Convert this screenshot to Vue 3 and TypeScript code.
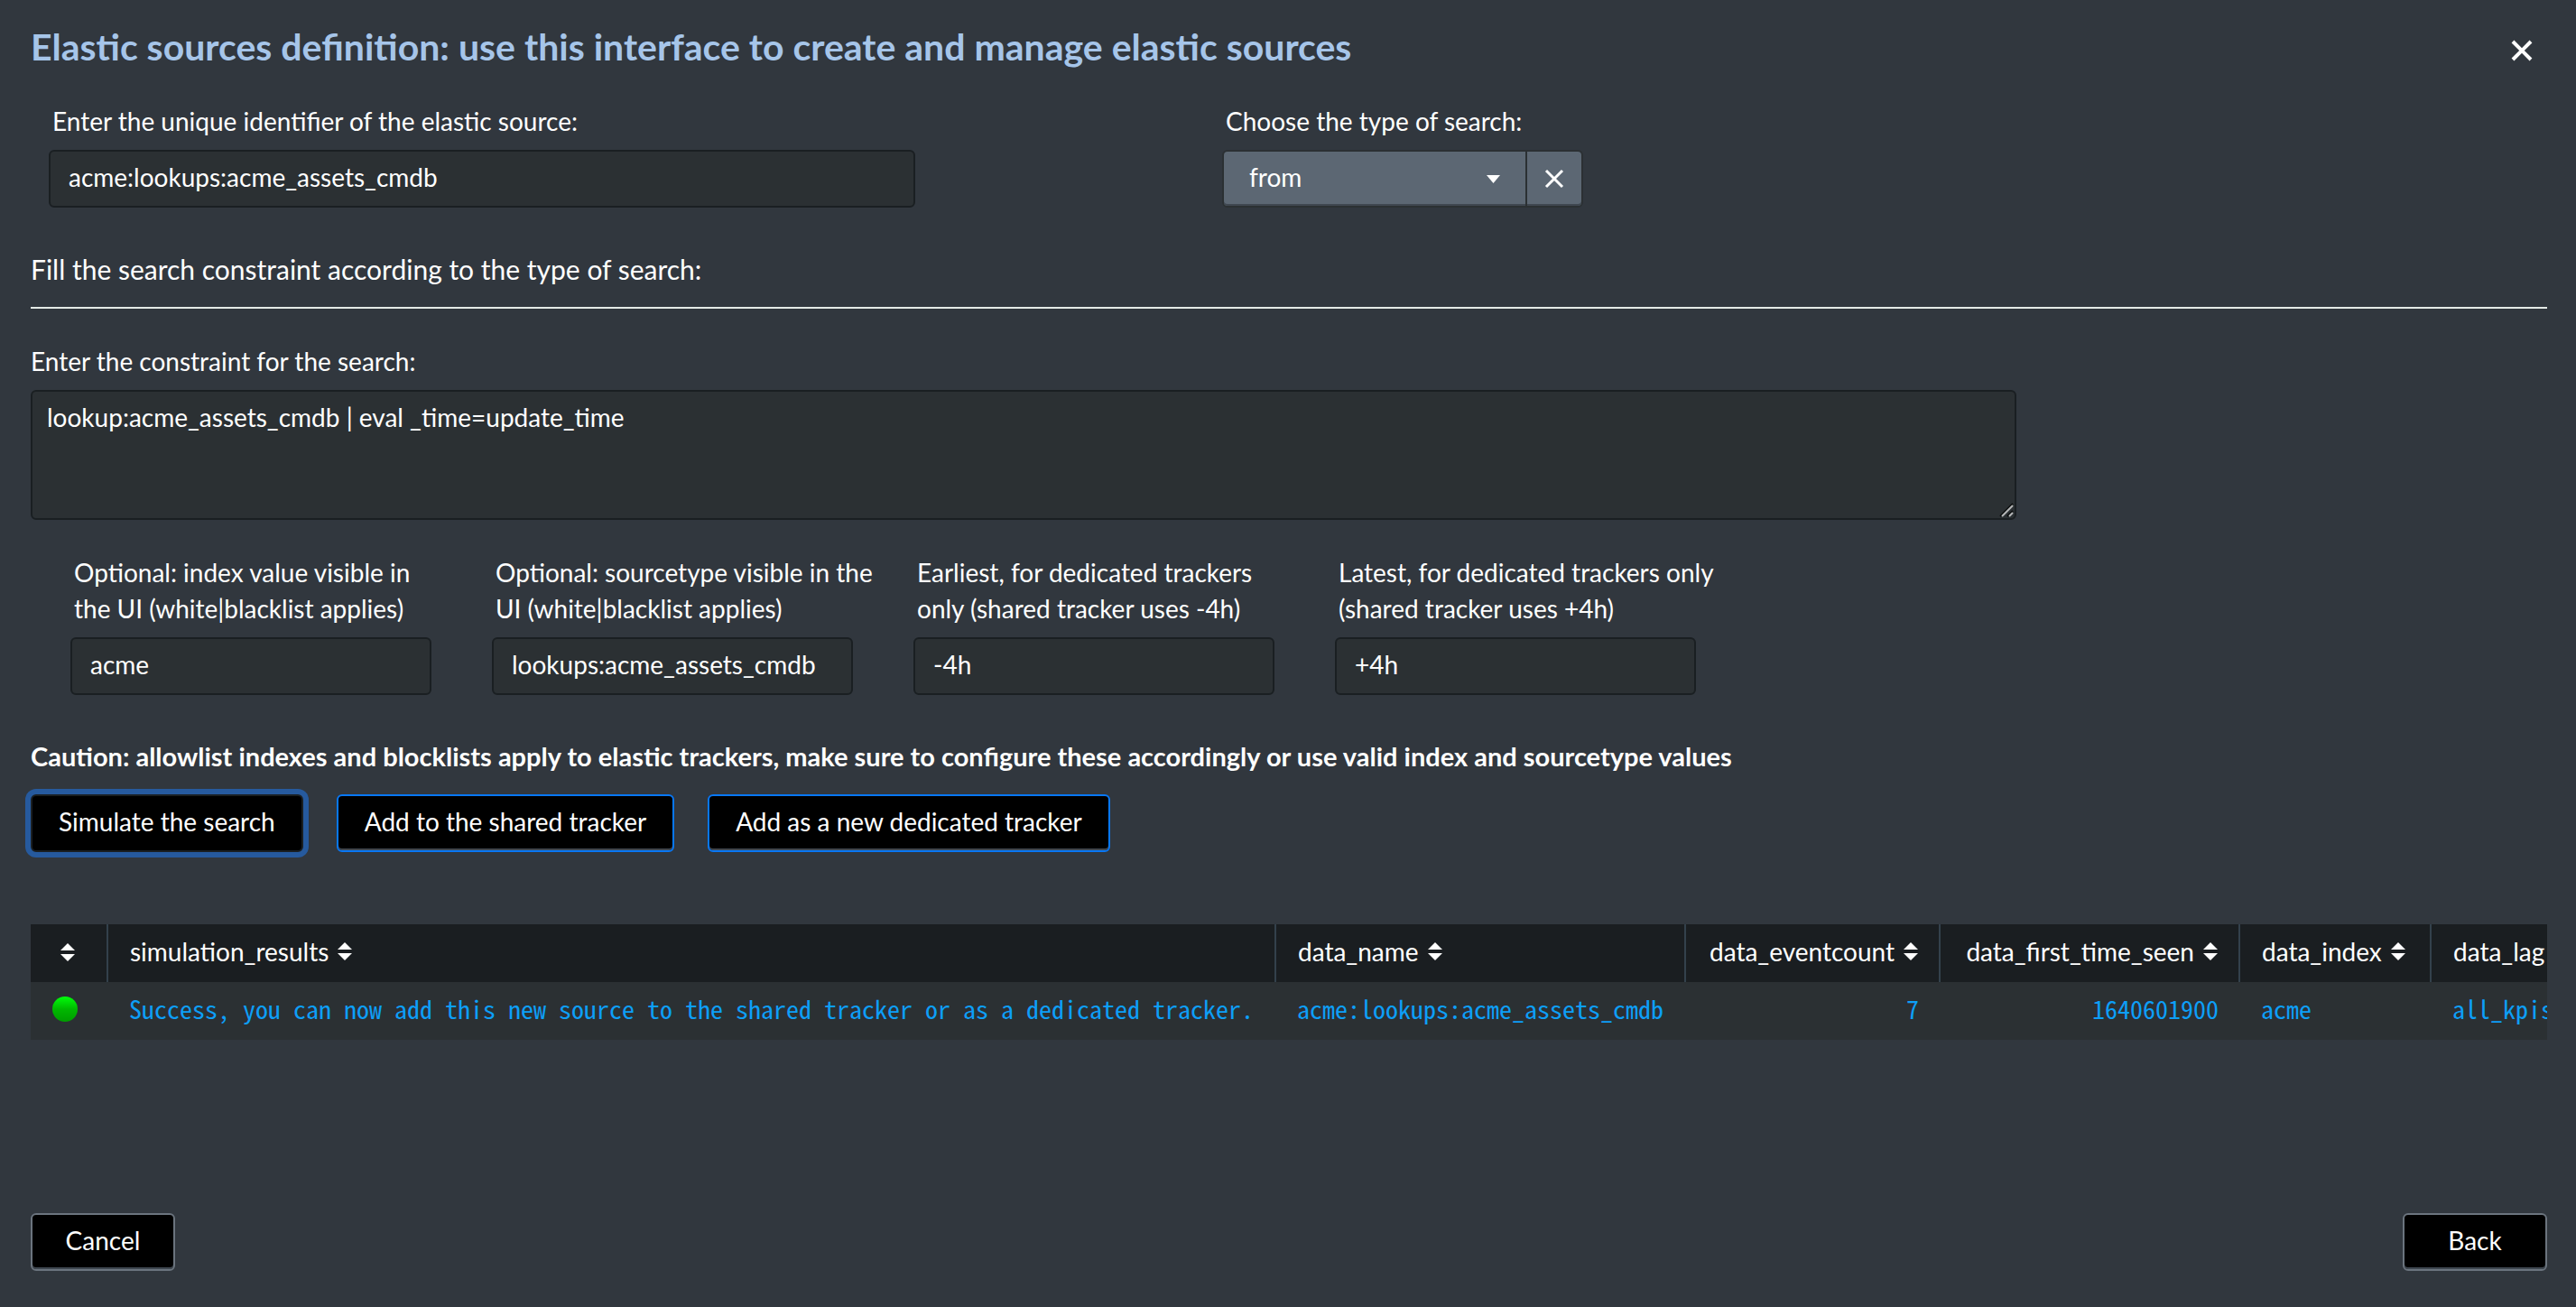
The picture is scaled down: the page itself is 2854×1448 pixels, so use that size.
<script setup lang="ts">
import { ref } from 'vue'

interface OptionField {
  id: string
  label: string
  value: string
}

interface Column {
  key: string
  width: number
  numeric?: boolean
}

const sourceId = ref('acme:lookups:acme_assets_cmdb')
const searchType = ref('from')
const constraint = ref('lookup:acme_assets_cmdb | eval _time=update_time')

const optionFields = ref<OptionField[]>([
  { id: 'opt-index', label: 'Optional: index value visible in\nthe UI (white|blacklist applies)', value: 'acme' },
  { id: 'opt-sourcetype', label: 'Optional: sourcetype visible in the\nUI (white|blacklist applies)', value: 'lookups:acme_assets_cmdb' },
  { id: 'opt-earliest', label: 'Earliest, for dedicated trackers\nonly (shared tracker uses -4h)', value: '-4h' },
  { id: 'opt-latest', label: 'Latest, for dedicated trackers only\n(shared tracker uses +4h)', value: '+4h' },
])

const columns: Column[] = [
  { key: 'simulation_results', width: 1294 },
  { key: 'data_name', width: 454 },
  { key: 'data_eventcount', width: 282, numeric: true },
  { key: 'data_first_time_seen', width: 332, numeric: true },
  { key: 'data_index', width: 212 },
  { key: 'data_lag', width: 180 },
]

const row: Record<string, string> = {
  simulation_results: 'Success, you can now add this new source to the shared tracker or as a dedicated tracker.',
  data_name: 'acme:lookups:acme_assets_cmdb',
  data_eventcount: '7',
  data_first_time_seen: '1640601900',
  data_index: 'acme',
  data_lag: 'all_kpis',
}
</script>

<template>
  <main class="modal">
    <header class="modal-head">
      <h1>Elastic sources definition: use this interface to create and manage elastic sources</h1>
      <button class="close" type="button" aria-label="Close">
        <svg width="24" height="24" viewBox="0 0 24 24"><path d="M2 2 22 22M22 2 2 22" /></svg>
      </button>
    </header>

    <section class="identity">
      <div class="field">
        <label for="source-id">Enter the unique identifier of the elastic source:</label>
        <input id="source-id" v-model="sourceId" class="text-box" type="text" />
      </div>
      <div class="field">
        <label for="search-type">Choose the type of search:</label>
        <div class="picker">
          <div class="picker-main">
            <select id="search-type" v-model="searchType">
              <option value="from">from</option>
            </select>
            <svg class="caret" width="15" height="9" viewBox="0 0 15 9"><path d="M0 0H15L7.5 9Z" /></svg>
          </div>
          <button class="picker-clear" type="button" aria-label="Clear">
            <svg width="22" height="22" viewBox="0 0 22 22"><path d="M2 2 20 20M20 2 2 20" /></svg>
          </button>
        </div>
      </div>
    </section>

    <h2>Fill the search constraint according to the type of search:</h2>

    <section class="constraint">
      <label for="constraint">Enter the constraint for the search:</label>
      <div class="area">
        <textarea id="constraint" v-model="constraint"></textarea>
        <svg class="grip" width="16" height="16" viewBox="0 0 16 16">
          <path class="grip-shade" d="M1 15 15 1M9 15 15 9" />
          <path class="grip-line" d="M3 15 15 3M11 15 15 11" />
        </svg>
      </div>
    </section>

    <section class="options">
      <div v-for="f in optionFields" :key="f.id" class="field">
        <label :for="f.id">{{ f.label }}</label>
        <input :id="f.id" v-model="f.value" class="text-box" type="text" />
      </div>
    </section>

    <p class="caution">
      Caution: allowlist indexes and blocklists apply to elastic trackers, make sure to configure these accordingly or use valid index and sourcetype values
    </p>

    <div class="actions">
      <button class="btn focused" type="button">Simulate the search</button>
      <button class="btn primary" type="button">Add to the shared tracker</button>
      <button class="btn primary" type="button">Add as a new dedicated tracker</button>
    </div>

    <div class="results">
      <table>
        <colgroup>
          <col class="status-col" />
          <col v-for="c in columns" :key="c.key" :style="{ width: c.width + 'px' }" />
        </colgroup>
        <thead>
          <tr>
            <th class="status" scope="col">
              <button class="sort" type="button" aria-label="Sort by status">
                <svg class="sort-icon" width="16" height="20" viewBox="0 0 16 20"><path d="M8 0 16 8H0ZM8 20 0 12H16Z" /></svg>
              </button>
            </th>
            <th v-for="c in columns" :key="c.key" scope="col" :class="{ numeric: c.numeric }">
              <button class="sort" type="button">
                {{ c.key }}
                <svg class="sort-icon" width="16" height="20" viewBox="0 0 16 20"><path d="M8 0 16 8H0ZM8 20 0 12H16Z" /></svg>
              </button>
            </th>
          </tr>
        </thead>
        <tbody>
          <tr>
            <td class="status"><span class="dot"></span></td>
            <td v-for="c in columns" :key="c.key" :class="{ numeric: c.numeric }">{{ row[c.key] }}</td>
          </tr>
        </tbody>
      </table>
    </div>

    <footer class="modal-foot">
      <button class="btn plain" type="button">Cancel</button>
      <button class="btn plain" type="button">Back</button>
    </footer>
  </main>
</template>

<style>
body {
  margin: 0;
  background: #31373e;
}
</style>

<style scoped>
* {
  box-sizing: border-box;
}
.modal {
  display: flex;
  flex-direction: column;
  min-height: 100vh;
  padding: 32px 32px 40px 34px;
  background: #31373e;
  color: #fff;
  font-family: Lato, 'Liberation Sans', sans-serif;
  font-size: 28px;
  line-height: 40px;
}
button,
input,
select,
textarea {
  margin: 0;
  color: inherit;
  font: inherit;
}
.modal-head {
  display: flex;
  justify-content: space-between;
  align-items: flex-start;
  height: 44px;
}
h1 {
  margin: 0;
  color: #a6c5e9;
  font-size: 41px;
  font-weight: 700;
  line-height: 40px;
}
.close {
  display: flex;
  margin: 12px 16px 0 0;
  padding: 0;
  border: 0;
  background: none;
}
.close path {
  fill: none;
  stroke: #fff;
  stroke-width: 4;
}
.identity {
  display: grid;
  grid-template-columns: minmax(0, 960px) minmax(0, 400px);
  column-gap: 340px;
  margin: 38px 0 0 20px;
}
.field label {
  display: block;
  margin-bottom: 12px;
  padding-left: 4px;
  white-space: pre;
}
.text-box {
  display: block;
  width: 100%;
  height: 64px;
  padding: 0 20px 4px;
  border: 2px solid #1a1f22;
  border-radius: 6px;
  background: #2b3033;
  outline: 0;
}
.picker {
  display: flex;
  width: 400px;
  height: 64px;
  border: 2px solid #2b3033;
  border-radius: 6px;
  background: #2b3033;
}
.picker-main {
  position: relative;
  flex: 1;
}
.picker select {
  width: 100%;
  height: 60px;
  padding: 0 28px 4px;
  border: 0;
  border-radius: 4px 0 0 4px;
  background: #5c6773;
  box-shadow: inset 0 -2px #3f4750;
  appearance: none;
}
.caret {
  position: absolute;
  top: 26px;
  right: 28px;
  fill: #fff;
  pointer-events: none;
}
.picker-clear {
  display: flex;
  align-items: center;
  justify-content: center;
  width: 60px;
  margin-left: 2px;
  padding: 0;
  border: 0;
  border-radius: 0 4px 4px 0;
  background: #5c6773;
  box-shadow: inset 0 -2px #3f4750;
}
.picker-clear path {
  fill: none;
  stroke: #fff;
  stroke-width: 3;
}
h2 {
  margin: 48px 0 0;
  padding-bottom: 22px;
  border-bottom: 2px solid #e3e9e6;
  font-size: 30px;
  font-weight: 400;
  line-height: 40px;
}
.constraint {
  margin-top: 38px;
}
.constraint label {
  display: block;
  margin-bottom: 12px;
}
.area {
  position: relative;
  max-width: 2200px;
}
textarea {
  display: block;
  width: 100%;
  height: 144px;
  padding: 8px 16px;
  border: 2px solid #1a1f22;
  border-radius: 6px;
  background: #2b3033;
  outline: 0;
  resize: none;
}
.grip {
  position: absolute;
  right: 3px;
  bottom: 3px;
  fill: none;
  stroke-width: 2;
  pointer-events: none;
}
.grip-shade {
  stroke: #0c0e0f;
}
.grip-line {
  stroke: #b4b6b7;
}
.options {
  display: grid;
  grid-template-columns: repeat(4, minmax(0, 400px));
  column-gap: 67px;
  margin: 38px 0 0 44px;
}
.caution {
  margin: 48px 0 0;
  font-size: 29px;
  font-weight: 700;
}
.actions {
  display: flex;
  gap: 37px;
  margin-top: 22px;
}
.btn {
  height: 64px;
  padding: 0 29px 4px;
  border: 2px solid #6b747e;
  border-radius: 6px;
  background: #000;
  box-shadow: inset 0 -2px #3f4750;
}
.btn.primary {
  border-color: #0877f5;
}
.btn.focused {
  border-color: #1a1f22;
  box-shadow: 0 0 0 6px #265a9e;
}
.btn.plain {
  width: 160px;
}
.results {
  margin-top: 80px;
  overflow: hidden;
}
table {
  width: 2838px;
  border-collapse: separate;
  border-spacing: 0;
  table-layout: fixed;
}
.status-col {
  width: 84px;
}
th,
td {
  height: 64px;
  padding: 0 23px 4px 24px;
  text-align: left;
  white-space: nowrap;
}
th {
  border-left: 2px solid #33414c;
  background: #1a1e21;
  font-weight: 400;
}
td {
  padding: 0 22px 6px 23px;
  border-left: 2px solid #2b3033;
  background: #2b3033;
  color: #0d9ff8;
  font-family: 'Noto Sans Mono CJK SC', 'Liberation Mono', monospace;
}
.numeric {
  text-align: right;
}
th.status,
td.status {
  border-left: 0;
  padding: 0 24px 4px;
}
.sort {
  display: inline-flex;
  align-items: center;
  gap: 10px;
  padding: 0;
  border: 0;
  background: none;
}
.status .sort {
  margin-left: 9px;
}
.sort-icon {
  fill: #fff;
}
.dot {
  display: block;
  width: 28px;
  height: 28px;
  border-radius: 50%;
  background: linear-gradient(#00ff0a, #00b800 50%, #009c00);
}
.modal-foot {
  display: flex;
  justify-content: space-between;
  margin-top: auto;
}
</style>
